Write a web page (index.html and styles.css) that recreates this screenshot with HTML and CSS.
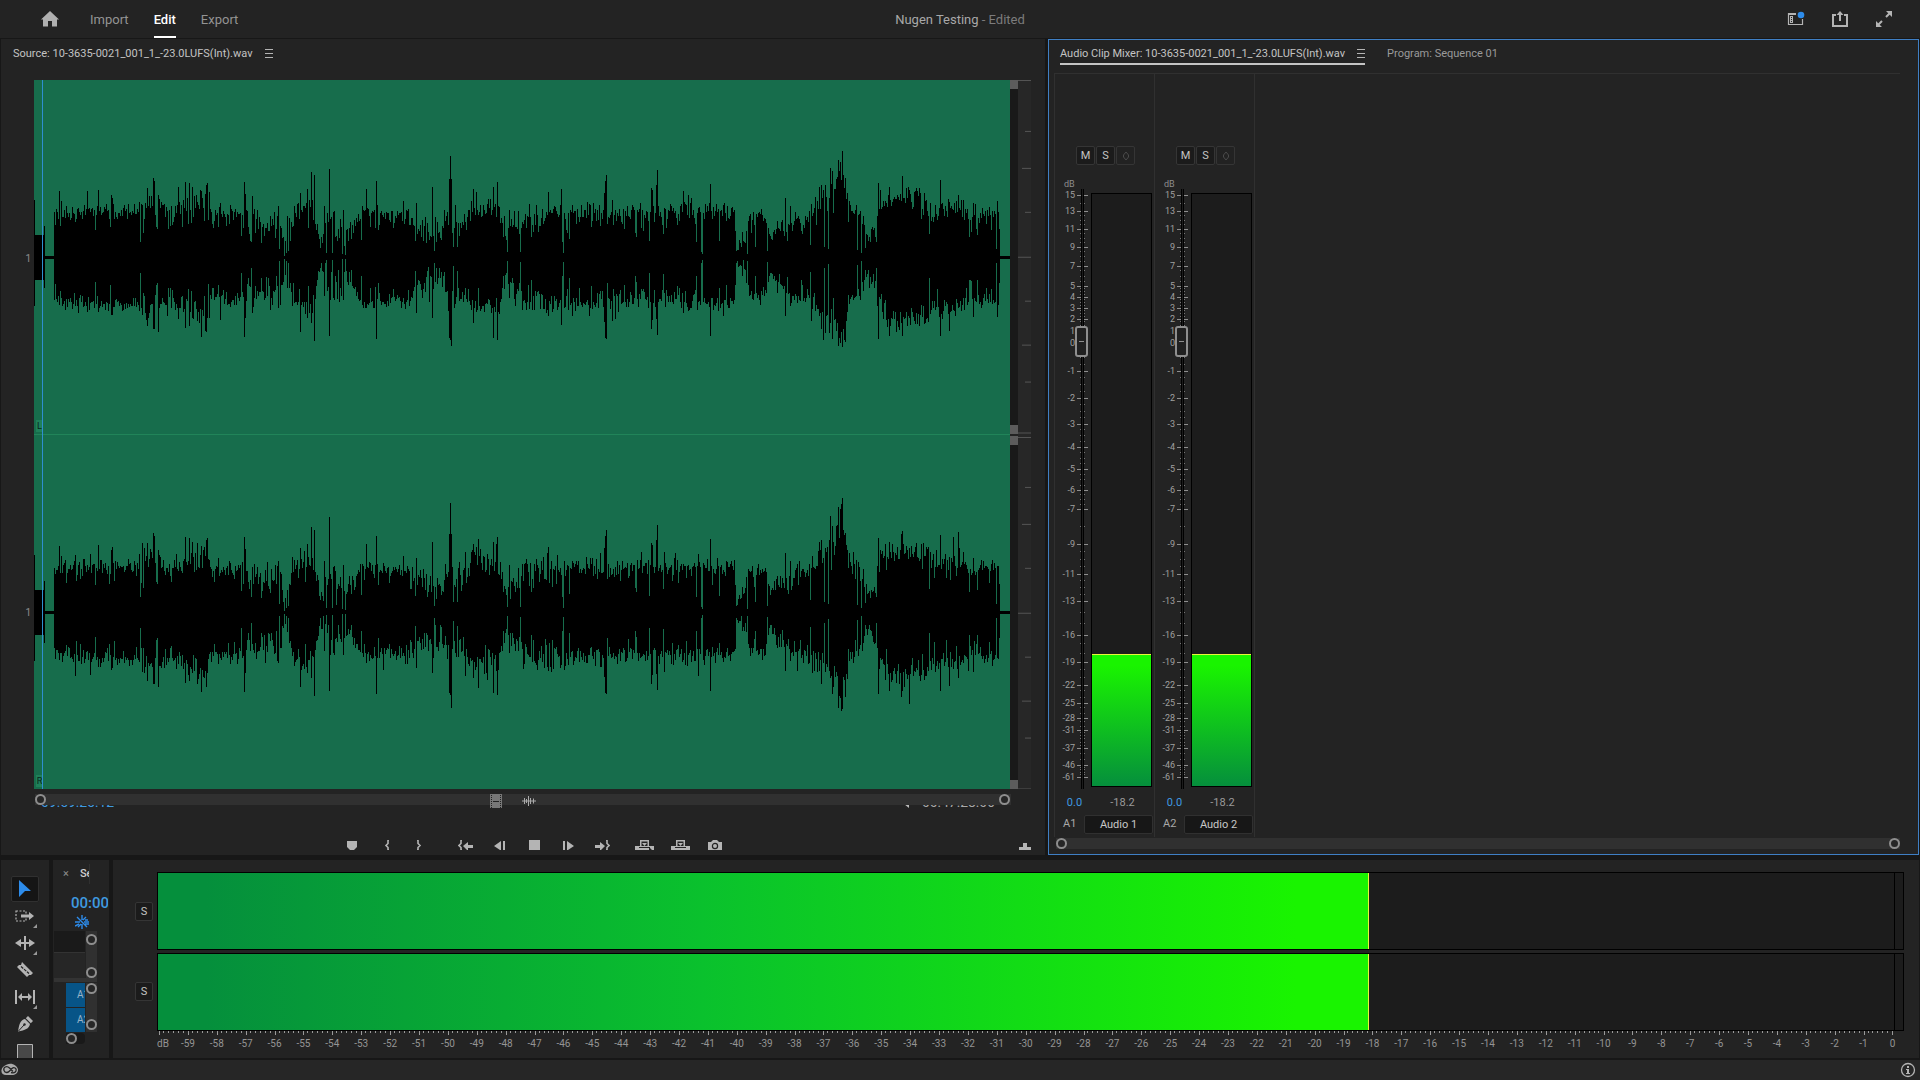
FILE: index.html
```html
<!DOCTYPE html>
<html lang="en">
<head>
<meta charset="utf-8">
<title>Nugen Testing</title>
<link rel="stylesheet" href="styles.css">
</head>
<body>
<header class="topbar">
  <nav class="topbar-nav">
    <button class="icon-btn" aria-label="Home"><svg width="18" height="16" viewBox="0 0 18 16"><path d="M9 0 0 8.500h2V15.500h5V10h4v5.500h5V8.500h2z" fill="#b0b0b0"/></svg></button>
    <a href="#import" class="mode">Import</a>
    <a href="#edit" class="mode mode-active">Edit</a>
    <a href="#export" class="mode">Export</a>
  </nav>
  <h1 class="project">Nugen Testing <span>- Edited</span></h1>
  <div class="topbar-tools">
    <button class="icon-btn" aria-label="Workspaces"><svg width="18" height="16" viewBox="0 0 18 16"><path d="M9 2.500H1.500v11h14V8M1 3.500h8" fill="none" stroke="#b4b4b4" stroke-width="1.200"/><path d="M3 5h3v7H3z" fill="#b4b4b4"/><path d="M4 6.500h1M4 8.500h1M4 10.500h1" stroke="#232323"/><circle cx="14" cy="4" r="3.300" fill="#2d8ceb"/></svg></button>
    <button class="icon-btn" aria-label="Quick export"><svg width="18" height="18" viewBox="0 0 18 18"><path d="M5 5H2v11h14V5h-3" fill="none" stroke="#b4b4b4" stroke-width="2"/><path d="M9 11V3" stroke="#b4b4b4" stroke-width="2"/><path d="M5.500 5 9 1l3.500 4z" fill="#b4b4b4"/></svg></button>
    <button class="icon-btn" aria-label="Full screen"><svg width="18" height="18" viewBox="0 0 18 18"><path d="M11 7l4-4M3 15l4-4" stroke="#b4b4b4" stroke-width="2"/><path d="M11 1h6v6zM1 11v6h6z" fill="#b4b4b4"/></svg></button>
  </div>
</header>

<main class="workspace">
  <section class="row row-upper">
    <section class="panel source">
      <div class="tabs"><h2 class="tab">Source: 10-3635-0021_001_1_-23.0LUFS(Int).wav</h2><button class="menu" aria-label="Panel menu"></button></div>
      <div class="wave-area">
        <div class="wave-labels"><span>1</span><span>1</span></div>
        <div class="wave">
          <div class="channel"><svg class="wave-svg" data-seed="7" data-boost="1" viewBox="0 0 977 354" preserveAspectRatio="none"><path/></svg><span class="channel-tag">L</span></div>
          <div class="channel"><svg class="wave-svg" data-seed="31" data-boost="1.08" viewBox="0 0 977 354" preserveAspectRatio="none"><path/></svg><span class="channel-tag">R</span></div>
          <div class="playhead"></div>
        </div>
        <div class="zoombars"><div class="zoombar"><i></i><i></i></div><div class="zoombar"><i></i><i></i></div></div>
        <div class="rulers">
          <svg viewBox="0 0 13 354" preserveAspectRatio="none"><path d="M0 .5h13M7 51.500h6M4 88.500h9M7 132.500h6M0 177.500h13M7 221.500h6M4 265.500h9M7 302.500h6M0 353.500h13"/></svg>
          <svg viewBox="0 0 13 354" preserveAspectRatio="none"><path d="M0 1.500h13M7 51.500h6M4 88.500h9M7 132.500h6M0 177.500h13M7 221.500h6M4 265.500h9M7 302.500h6M0 353.500h13"/></svg>
        </div>
      </div>
      <div class="hscroll source-scroll">
        <i class="knob"></i>
        <span class="drag-icons">
          <svg width="12" height="14" viewBox="0 0 12 14"><path d="M0 0h12v14H0z" fill="#777"/><path d="M1.500 1v13M10.500 1v13" stroke="#222" stroke-dasharray="1 1"/><path d="M3 7.500h6" stroke="#222"/></svg>
          <svg width="14" height="12" viewBox="0 0 14 12"><path d="M0 6h14M2.500 3v6M4.500 4v4M6.500 1v10M8.500 3v6M11.500 3.500v5" stroke="#aaa" fill="none"/></svg>
        </span>
        <i class="knob"></i>
      </div>
      <div class="timecodes"><span class="tc-in">09:59:25:12</span><svg width="6" height="4" viewBox="0 0 6 4"><path d="M0 0h5v4z" fill="#bbb"/></svg><span class="tc-out">00:47:28:06</span></div>
      <div class="transport">
        <div class="transport-main">
          <button class="icon-btn" aria-label="Add marker"><svg width="20" height="10"><path d="M5 1h10v6l-3 3H8L5 7z" fill="#b4b4b4"/></svg></button>
          <button class="icon-btn" aria-label="Mark in"><svg width="14" height="10"><path d="M9 0H8v3.500L6 5.500l2 2V10h1" fill="none" stroke="#b4b4b4" stroke-width="1.600"/></svg></button>
          <button class="icon-btn" aria-label="Mark out"><svg width="14" height="10"><path d="M5 0h1v3.500l2 2-2 2V10H5" fill="none" stroke="#b4b4b4" stroke-width="1.600"/></svg></button>
        </div>
        <div class="transport-main transport-play">
          <button class="icon-btn" aria-label="Go to in"><svg width="16" height="10"><path d="M4 0H3v3.500L1 5.500l2 2V10h1" fill="none" stroke="#b4b4b4" stroke-width="1.600"/><path d="M5 6l5-4v3h5v3h-5v3z" fill="#b4b4b4"/></svg></button>
          <button class="icon-btn" aria-label="Step back"><svg width="16" height="10"><path d="M9 1v9H8L2 6zM11 1h2v9h-2z" fill="#b4b4b4"/></svg></button>
          <button class="icon-btn" aria-label="Stop"><svg width="16" height="10"><path d="M3 0h11v10H3z" fill="#b4b4b4"/></svg></button>
          <button class="icon-btn" aria-label="Step forward"><svg width="16" height="10"><path d="M7 1v9h1l6-4zM3 1h2v9H3z" fill="#b4b4b4"/></svg></button>
          <button class="icon-btn" aria-label="Go to out"><svg width="16" height="10"><path d="M12 0h1v3.500l2 2-2 2V10h-1" fill="none" stroke="#b4b4b4" stroke-width="1.600"/><path d="M11 6L6 2v3H1v3h5v3z" fill="#b4b4b4"/></svg></button>
        </div>
        <div class="transport-main transport-edit">
          <button class="icon-btn" aria-label="Insert"><svg width="20" height="10"><path d="M0 6h5V0h9v6h5v4h-2L14 7v3H0z" fill="#b4b4b4"/><path d="M6.500 1.500h6V6h-6z" fill="#232323"/><path d="M7 3h5L9.500 6z" fill="#b4b4b4"/><path d="M4 7.500h11" stroke="#232323"/></svg></button>
          <button class="icon-btn" aria-label="Overwrite"><svg width="20" height="10"><path d="M0 6h5V0h9v6h5v4H0z" fill="#b4b4b4"/><path d="M6.500 1.500h6V6h-6z" fill="#232323"/><path d="M7 3h5L9.500 6z" fill="#b4b4b4"/><path d="M4 7.500h11" stroke="#232323"/></svg></button>
          <button class="icon-btn" aria-label="Export frame"><svg width="16" height="10"><path d="M1 2h3l2-2h4l2 2h3v8H1z" fill="#b4b4b4"/><circle cx="8" cy="6" r="2.600" fill="none" stroke="#232323" stroke-width="1.200"/></svg></button>
        </div>
        <button class="icon-btn add-btn" aria-label="Button editor"><svg width="12" height="7"><path d="M0 4h4V0h4v4h4v3H0z" fill="#b4b4b4"/></svg></button>
      </div>
    </section>

    <section class="panel mixer">
      <div class="tabs">
        <h2 class="tab-active"><span class="tab">Audio Clip Mixer: 10-3635-0021_001_1_-23.0LUFS(Int).wav</span><button class="menu" aria-label="Panel menu"></button></h2>
        <a class="tab tab-link" href="#program">Program: Sequence 01</a>
      </div>
      <div class="strips">
        <div class="strip">
          <div class="strip-btns"><button class="sq">M</button><button class="sq">S</button><button class="sq sq-off" aria-label="Write keyframes"><svg width="8" height="10" viewBox="0 0 8 10"><path d="M4 1l2.500 3v2L4 9 1.500 6V4z" fill="none" stroke="#4a4a4a"/></svg></button></div>
          <div class="db">dB</div>
          <div class="strip-main"><div class="scale"></div><input class="fader" type="range" min="0" max="1000" value="759" aria-label="Audio 1 volume"><div class="vmeter"><div class="vlevel"></div></div></div>
          <div class="values"><span class="vol">0.0</span><span class="peak">-18.2</span></div>
          <div class="names"><label for="track1">A1</label><input id="track1" class="track-name" value="Audio 1"></div>
        </div>
        <div class="strip">
          <div class="strip-btns"><button class="sq">M</button><button class="sq">S</button><button class="sq sq-off" aria-label="Write keyframes"><svg width="8" height="10" viewBox="0 0 8 10"><path d="M4 1l2.500 3v2L4 9 1.500 6V4z" fill="none" stroke="#4a4a4a"/></svg></button></div>
          <div class="db">dB</div>
          <div class="strip-main"><div class="scale"></div><input class="fader" type="range" min="0" max="1000" value="759" aria-label="Audio 2 volume"><div class="vmeter"><div class="vlevel"></div></div></div>
          <div class="values"><span class="vol">0.0</span><span class="peak">-18.2</span></div>
          <div class="names"><label for="track2">A2</label><input id="track2" class="track-name" value="Audio 2"></div>
        </div>
      </div>
      <div class="hscroll"><i class="knob"></i><i class="knob"></i></div>
    </section>
  </section>

  <section class="row row-lower">
    <section class="panel tools">
      <button class="tool tool-on" aria-label="Selection"><svg width="14" height="18" viewBox="0 0 14 18"><path d="M1 0l12 11H7l-6 6z" fill="#2d8ceb"/></svg></button>
      <button class="tool more" aria-label="Track select forward"><svg width="20" height="14" viewBox="0 0 20 14"><path d="M1 2h10v10H1z" fill="none" stroke="#b4b4b4" stroke-width="1.200" stroke-dasharray="2 1.500"/><path d="M6 5.500h8V3l5 4-5 4V8.500H6z" fill="#b4b4b4"/></svg></button>
      <button class="tool more" aria-label="Ripple edit"><svg width="20" height="14" viewBox="0 0 20 14"><path d="M9 0h2v14H9zM0 7l6-4v3h8V3l6 4-6 4V8H6v3z" fill="#b4b4b4"/></svg></button>
      <button class="tool" aria-label="Razor"><svg width="16" height="16" viewBox="0 0 16 16"><path d="M5 0l11 11-2 2h-2l-2 2L0 5l2-2h2z" fill="#b4b4b4"/><path d="M4 4.500l8 7" stroke="#232323" stroke-width="1.200" stroke-dasharray="3 1"/></svg></button>
      <button class="tool more" aria-label="Slip"><svg width="20" height="14" viewBox="0 0 20 14"><path d="M0 0h2v14H0zM18 0h2v14h-2zM3 7l4-4v3h6V3l4 4-4 4V8H7v3z" fill="#b4b4b4"/></svg></button>
      <button class="tool" aria-label="Pen"><svg width="16" height="16" viewBox="0 0 16 16"><path d="M11 0l5 5-2.200 2.200-5-5z" fill="#b4b4b4"/><path d="M8 3l5 5c-1 5-5 6-12 7.500C2 9 3 4 8 3z" fill="#b4b4b4"/><path d="M1.500 15l5.500-6" stroke="#232323"/><circle cx="7.500" cy="8.500" r="1.200" fill="#232323"/></svg></button>
      <button class="tool tool-cut" aria-label="Rectangle"><svg width="16" height="16" viewBox="0 0 16 16"><path d="M.5.5h15v15H.5z" fill="#484848" stroke="#b4b4b4"/></svg></button>
    </section>

    <section class="panel timeline">
      <div class="tl-tab"><button class="close" aria-label="Close">×</button><span class="tl-name">Sequence 01</span></div>
      <div class="tl-time">00:00:00:00</div>
      <svg class="tl-snap" width="14" height="14" viewBox="0 0 14 14"><path d="M0 7h5M9 7h5M0 11l4-2M7 0v5M7 9v5M2 2l10 10M11 2l-3 3M3 12l3-3M10 5h3M10 9h4" fill="none" stroke="#2d8ceb" stroke-width="1.400"/></svg>
      <div class="tl-body">
        <div class="tl-tracks"><div class="tl-dark"></div><div class="tl-empty"></div></div>
        <div class="vscroll"><i class="knob"></i><i class="knob"></i></div>
      </div>
      <div class="tl-split"></div>
      <div class="tl-body tl-audio">
        <div class="tl-tracks"><button class="patch">A1</button><button class="patch">A2</button></div>
        <div class="vscroll"><i class="knob"></i><i class="knob"></i></div>
      </div>
      <div class="tl-zoom"><i class="knob"></i></div>
    </section>

    <section class="panel meters">
      <div class="solo"><button class="sq">S</button><button class="sq">S</button></div>
      <div class="hmeters">
        <div class="hmeter"><div class="hlevel"></div></div>
        <div class="hmeter"><div class="hlevel"></div></div>
        <div class="hscale"></div>
      </div>
    </section>
  </section>
</main>

<footer class="status">
  <svg width="18" height="14" viewBox="0 0 18 14"><path d="M6 1.500c5-2 10 1 11 5 0 4-3 5.500-6 5.500H5c-3 0-5-2-4.500-5C1 4 3 3 6 1.500z" fill="#aaa"/><path d="M12 8.500L8.500 5C5.500 2 2 4.500 3 7.500s4 2 5 1l3-3c2-2 5 0 4 2.500s-3 2-5 1.500" fill="none" stroke="#262626" stroke-width="1.300"/></svg>
  <button class="icon-btn info" aria-label="Information"><svg width="16" height="16" viewBox="0 0 16 16"><circle cx="8" cy="8" r="6.500" fill="none" stroke="#b4b4b4" stroke-width="1.300"/><path d="M7 4h2v2H7zM6 7h3v4h1v1H6v-1h1V8H6z" fill="#b4b4b4"/></svg></button>
</footer>
<script src="app.js"></script>
</body>
</html>
```
FILE: styles.css
```css
* { box-sizing: border-box; }
body {
  margin: 0;
  min-height: 100vh;
  display: flex;
  flex-direction: column;
  background: #171717;
  color: #a8a8a8;
  font: 11px/16px Roboto, "Noto Sans", sans-serif;
}
h1, h2 { margin: 0; font-size: inherit; font-weight: 400; }
a { color: inherit; text-decoration: none; }
svg { display: block; }
button, input { font: inherit; color: inherit; margin: 0; padding: 0; border: 0; background: none; }
.icon-btn { display: flex; align-items: center; justify-content: center; }

/* Top bar */
.topbar {
  display: grid;
  grid-template-columns: 1fr auto 1fr;
  align-items: center;
  height: 38px;
  padding: 0 27px;
  background: #232323;
  font-size: 13px;
}
.topbar-nav { display: flex; align-items: center; gap: 25px; height: 38px; padding-left: 14px; color: #949494; }
.topbar-nav .icon-btn { margin-right: 6px; }
.mode { line-height: 38px; height: 37px; border-bottom: 2px solid transparent; }
.mode-active { color: #fff; font-weight: 500; border-color: #fff; }
.project { padding-top: 2px; color: #a8a8a8; }
.project span { color: #7c7c7c; }
.topbar-tools { display: flex; justify-content: flex-end; gap: 26px; }

/* Panels */
.workspace { flex: 1; display: flex; flex-direction: column; gap: 5px; padding: 1px 1px 2px; }
.row { display: flex; gap: 3px; min-width: 0; }
.row-upper { flex: 1; }
.row-lower { height: 198px; gap: 4px; }
.panel { background: #232323; }
.tabs { display: flex; height: 32px; padding-top: 6px; }
.tab { color: #c4c4c4; white-space: nowrap; }
.menu {
  width: 8px; height: 9px; margin: 3px 0 0 12px;
  background: repeating-linear-gradient(#b4b4b4 0 1px, transparent 1px 4px);
}
.hscroll { display: flex; justify-content: space-between; align-items: center; height: 11px; background: #303030; }
.knob { display: block; width: 11px; height: 11px; border: 2px solid #8e8e8e; border-radius: 50%; background: #262626; flex: none; }

/* Source monitor */
.source { flex: 1044 1 0; display: flex; flex-direction: column; }
.source .tabs { height: 41px; padding: 7px 0 0 12px; }
.wave-area { flex: 1; display: flex; margin-right: 14px; min-height: 400px; }
.wave-labels { width: 33px; display: flex; flex-direction: column; font-size: 10px; }
.wave-labels span { flex: 1; display: flex; align-items: center; justify-content: flex-end; padding: 3px 3px 0 0; color: #8e8e8e; }
.wave { flex: 1; position: relative; display: flex; flex-direction: column; background: #176d4c; overflow: hidden; }
.channel { flex: 1; position: relative; min-height: 0; }
.channel + .channel { border-top: 1px solid #218459; }
.wave-svg { position: absolute; inset: 0; width: 100%; height: 100%; }
.wave-svg path { fill: #000; shape-rendering: crispEdges; }
.channel-tag { position: absolute; left: 2px; bottom: 2px; width: 7px; height: 12px; background: #1f8059; color: #08261b; font-size: 9px; line-height: 13px; text-align: center; }
.playhead { position: absolute; left: 8px; top: 0; bottom: 0; width: 1px; background: #2f8fd0; }
.zoombars, .rulers { display: flex; flex-direction: column; gap: 2px; }
.zoombar { flex: 1; width: 8px; background: #191919; display: flex; flex-direction: column; justify-content: space-between; }
.zoombar i { height: 9px; background: #5c5c5c; }
.rulers { width: 13px; background: #272727; }
.rulers svg { flex: 1 1 0; width: 13px; height: 0; min-height: 0; }
.rulers path { stroke: #555; fill: none; shape-rendering: crispEdges; }
.source-scroll { margin: 5px 34px 0 34px; }
.source-scroll .knob { margin-right: 1px; }
.drag-icons { display: flex; align-items: center; gap: 20px; height: 14px; margin-top: 3px; padding-right: 20px; }
.timecodes { display: flex; align-items: flex-end; height: 3px; overflow: hidden; margin: 0 50px 0 40px; font-size: 14px; line-height: 12px; }
.tc-in { color: #3f9ae0; margin-right: auto; }
.tc-out { margin-left: 12px; }
.transport { display: grid; grid-template-columns: 1fr auto 1fr; align-items: end; height: 42px; margin: 0 14px 5px 0; padding-left: 4px; }
.transport-main { display: flex; gap: 18px; justify-content: flex-end; }
.transport-play { padding-left: 32px; }
.transport-edit { grid-column: 3; grid-row: 1; justify-content: flex-start; gap: 16px; padding-left: 25px; }
.add-btn { grid-column: 3; grid-row: 1; justify-self: end; }

/* Audio clip mixer */
.mixer { flex: 859 1 0; display: flex; flex-direction: column; border: 1px solid #3f7fc4; padding: 0 5px 5px; }
.mixer .tabs { gap: 22px; height: 33px; padding-left: 6px; }
.tab-active { display: flex; height: 19px; border-bottom: 2px solid #c4c4c4; }
.tab-link { color: #9a9a9a; }
.strips { flex: 1; display: flex; margin-right: 13px; margin-bottom: 1px; border-top: 1px solid #303030; border-left: 1px solid #303030; }
.strip { width: 100px; display: flex; flex-direction: column; padding: 72px 1px 3px 0; border-right: 1px solid #303030; }
.strip-btns { display: flex; gap: 1px; padding-left: 21px; }
.sq { width: 19px; height: 19px; border: 1px solid #353535; border-radius: 2px; background: #1b1b1b; color: #c4c4c4; display: flex; align-items: center; justify-content: center; }
.sq-off { background: #222; }
.db { margin-top: 11px; padding-left: 9px; font-size: 9px; color: #8e8e8e; }
.strip-main { flex: 1; display: grid; grid-template-columns: 33px 3px 61px; margin-top: -3px; }
.scale { grid-area: 1 / 1; display: flex; flex-direction: column; padding-top: 6px; font-size: 9px; background: linear-gradient(90deg, transparent 26px, #000 26px 27px, #1c1c1c 27px 28px, #000 28px 29px, transparent 29px); }
.seg { display: grid; grid-template-columns: 20px 11px; gap: 2px; min-height: 0; flex-basis: 0; }
.seg-label { height: 0; line-height: 0; text-align: right; color: #a0a0a0; }
.seg-ticks { display: flex; flex-direction: column; justify-content: space-evenly; align-items: center; min-height: 0; background: linear-gradient(90deg, #8e8e8e 4px, transparent 4px 7px, #8e8e8e 7px) top / 100% 1px no-repeat; }
.seg-ticks i { width: 5px; height: 1px; border: solid #777; border-width: 0 1px; }
.fader {
  grid-area: 1 / 1;
  justify-self: end;
  width: 13px; height: 100%;
  writing-mode: vertical-lr; direction: rtl;
  appearance: none; -webkit-appearance: none;
}
.fader::-webkit-slider-thumb {
  -webkit-appearance: none;
  width: 13px; height: 31px;
  border: 2px solid #8e8e8e; border-radius: 3px;
  background: linear-gradient(#8e8e8e, #8e8e8e) center / 5px 1px no-repeat #202020;
}
.vmeter { grid-column: 3; margin: 4px 0 2px; padding: 0 1px 1px; outline: 1px solid #000; outline-offset: -1px; background: #1c1c1c; display: flex; flex-direction: column; justify-content: flex-end; }
.vlevel { height: 22.300%; border-top: 1px solid #e9f53a; background: linear-gradient(#19f400 8%, #058f3c); }
.values { display: flex; align-items: center; height: 25px; padding-top: 3px; }
.values span { text-align: center; }
.vol { width: 39px; color: #3f9ae0; }
.peak { width: 57px; color: #9a9a9a; }
.names { display: flex; align-items: center; justify-content: space-between; height: 20px; padding-left: 8px; }
.track-name { width: 69px; height: 19px; border: 1px solid #303030; border-radius: 2px; background: #171717; color: #c8c8c8; text-align: center; }
.mixer .hscroll { margin: 0 13px 0 2px; }

/* Tools */
.tools { width: 48px; display: flex; flex-direction: column; align-items: center; padding-top: 16px; overflow: hidden; }
.tool { flex: none; width: 28px; height: 27px; position: relative; display: flex; align-items: center; justify-content: center; }
.tool-on { height: 26px; border: 1px solid #303030; border-radius: 2px; background: #151515; }
.more::after { content: ""; position: absolute; right: 2px; bottom: 1px; border: 2px solid transparent; border-right-color: #999; border-bottom-color: #999; }
.tool-cut { height: 30px; }

/* Timeline */
.timeline { width: 56px; display: flex; flex-direction: column; padding: 4px 0 0 1px; overflow: hidden; }
.tl-tab { display: flex; align-items: center; height: 20px; width: 36px; padding-left: 9px; gap: 11px; border-right: 1px solid #303030; overflow: hidden; }
.close { color: #8e8e8e; }
.tl-name { color: #d0d0d0; font-weight: 500; white-space: nowrap; }
.tl-time { margin: 9px 0 0 17px; width: 37px; overflow: hidden; font-size: 15px; line-height: 20px; font-weight: 500; color: #3f9ae0; }
.tl-snap { margin: 2px 0 2px 21px; }
.tl-body { display: flex; gap: 1px; height: 47px; width: 43px; }
.tl-tracks { flex: 1; min-width: 0; display: flex; flex-direction: column; }
.tl-dark { height: 22px; background: #1a1a1a; border-bottom: 1px solid #333; }
.tl-empty { flex: 1; background: #262626; }
.vscroll { width: 11px; display: flex; flex-direction: column; justify-content: space-between; padding: 3px 0 0; background: #303030; }
.tl-split { width: 43px; height: 4px; background: #333; }
.tl-audio { height: 49px; margin-top: 1px; }
.tl-audio .tl-tracks { gap: 1px; }
.tl-audio .vscroll { padding: 0 0 2px; }
.patch { flex: 1; margin-left: 12px; padding-left: 11px; overflow: hidden; background: #075487; color: #9ab4c8; font-size: 10px; text-align: left; }
.tl-zoom { width: 19px; margin: 1px 0 0 12px; background: #191919; border-radius: 0 4px 4px 0; }

/* Audio meters */
.meters { flex: 1; display: flex; gap: 4px; padding: 12px 15px 0 22px; }
.solo { display: flex; flex-direction: column; gap: 61px; padding-top: 30px; }
.solo .sq { width: 18px; }
.hmeters { flex: 1; display: flex; flex-direction: column; gap: 3px; }
.hmeter { height: 78px; display: flex; border: 1px solid #000; background: linear-gradient(#000, #000) right 8px top / 1px 100% no-repeat #1c1c1c; }
.hlevel { width: 69.400%; border-right: 1px solid #e9f53a; background: linear-gradient(90deg, #058f3c, #058f3c 4%, #0ac12d 45%, #19f400 94%); }
.hscale { display: flex; margin: -3px 12px 0 2px; font-size: 10px; }
.hseg { flex: 1 1 0; min-width: 0; }
.hseg:last-child { flex: 0 0 0; }
.hseg-ticks { display: flex; justify-content: space-evenly; height: 4px; background: linear-gradient(#999, #999) left / 1px 100% no-repeat; width: 100%; }
.hseg:last-child .hseg-ticks { width: 1px; }
.hseg-ticks i { width: 1px; height: 2px; background: #999; }
.hseg-label { display: flex; justify-content: center; width: 0; white-space: nowrap; line-height: 18px; color: #949494; }
.hseg:first-child .hseg-label { width: 8px; }

/* Status bar */
.status { display: flex; justify-content: space-between; align-items: center; height: 20px; padding: 0 4px 0 1px; background: #262626; }
```
FILE: app.js
```js
// Fader scale: label, offset of its tick in the scale, minor ticks below it.
const marks = [
  ["15", 0, 1], ["13", 16, 3], ["11", 34, 3], ["9", 52, 3], ["7", 71, 3], ["5", 91, 3], ["4", 102, 3], ["3", 113, 3],
  ["2", 124, 3], ["1", 136, 1], ["0", 148, 3], ["-1", 176, 3], ["-2", 203, 3], ["-3", 229, 3], ["-4", 252, 3],
  ["-5", 274, 3], ["-6", 295, 3], ["-7", 314, 1], ["-9", 349, 3], ["-11", 379, 3], ["-13", 406, 2], ["-16", 440, 2],
  ["-19", 467, 2], ["-22", 490, 2], ["-25", 508, 2], ["-28", 523, 2], ["-31", 535, 5], ["-37", 553, 2], ["-46", 570, 4], ["-61", 582, 0]
];
document.querySelectorAll(".scale").forEach(scale => {
  scale.innerHTML = marks.map(([label, at, minor], i) => {
    const end = i + 1 < marks.length ? marks[i + 1][1] : 594;
    return `<div class="seg" style="flex-grow:${end - at}"><span class="seg-label">${label}</span><span class="seg-ticks">${"<i></i>".repeat(minor)}</span></div>`;
  }).join("");
});

// Output meter scale, -60 dB to 0 dB.
document.querySelector(".hscale").innerHTML = Array.from({ length: 61 }, (_, i) => {
  const label = i === 0 ? "dB" : i - 60;
  return `<div class="hseg"><div class="hseg-ticks">${i < 60 ? "<i></i>".repeat(5) : ""}</div><div class="hseg-label">${label}</div></div>`;
}).join("");

// Envelope knots: column, level above the centre line, level below, spread.
const env = [
  [20, 43, 41, 6], [60, 45, 45, 6], [96, 46, 46, 6], [118, 54, 54, 8], [135, 43, 43, 7], [152, 50, 50, 9], [172, 58, 62, 11],
  [175, 45, 40, 7], [205, 42, 42, 8], [212, 34, 34, 13], [246, 32, 34, 14], [250, 12, 12, 5], [256, 35, 35, 8], [264, 50, 50, 6], [280, 46, 44, 8],
  [286, 14, 8, 4], [292, 26, 22, 12], [305, 24, 26, 14], [316, 24, 20, 8], [328, 46, 44, 5], [345, 44, 43, 6], [368, 40, 42, 6],
  [378, 40, 40, 9], [384, 28, 28, 12], [404, 26, 26, 12], [416, 36, 36, 12], [427, 34, 38, 12], [438, 46, 44, 10], [445, 50, 50, 9], [464, 46, 48, 9], [472, 20, 16, 5],
  [480, 30, 32, 12], [492, 40, 44, 12], [530, 45, 47, 8], [590, 42, 42, 8], [600, 45, 42, 7], [660, 46, 44, 7], [701, 44, 44, 7],
  [704, 12, 7, 4], [712, 16, 10, 6], [716, 40, 38, 7], [733, 40, 36, 7], [737, 20, 14, 3], [744, 26, 24, 8], [757, 32, 34, 8],
  [770, 40, 40, 9], [788, 48, 50, 10], [798, 62, 62, 16], [808, 82, 78, 10], [812, 72, 72, 10], [818, 48, 40, 6], [829, 40, 38, 7], [832, 16, 14, 8],
  [841, 24, 28, 8], [847, 52, 48, 10], [860, 60, 60, 9], [875, 60, 62, 10], [893, 56, 58, 10], [899, 48, 46, 9], [929, 52, 50, 8], [937, 34, 32, 10], [947, 44, 42, 8], [966, 45, 45, 2]
];
// Single columns that stand out: transients and near-silent gaps.
const cols = {
  25: [66, 47], 27: [56, 40], 61: [27, 24], 64: [67, 54], 77: [62, 57], 106: [15, 15], 109: [24, 35], 113: [69, 68], 119: [79, 71], 120: [76, 71],
  122: [30, 27], 123: [28, 25], 124: [62, 74], 151: [75, 70], 155: [74, 68], 158: [70, 60], 167: [66, 79], 172: [72, 74], 173: [74, 60],
  207: [21, 15], 210: [75, 79], 211: [63, 60], 214: [30, 20], 217: [15, 10], 220: [48, 40], 224: [28, 38], 227: [14, 20], 234: [26, 20],
  242: [28, 18], 244: [51, 50], 245: [8, 3], 250: [1, 1], 252: [4, 3], 254: [6, 5], 266: [64, 74], 273: [68, 60], 277: [85, 65], 280: [82, 83], 290: [51, 38], 292: [4, 2],
  295: [88, 78], 296: [38, 42], 298: [4, 2], 299: [45, 40], 300: [46, 42], 304: [28, 12], 308: [3, 1], 309: [47, 42], 311: [2, 1], 317: [18, 12], 327: [17, 18],
  332: [68, 50], 342: [76, 81], 344: [27, 25], 369: [56, 40], 381: [16, 13], 382: [54, 55], 398: [70, 60], 400: [6, 5], 407: [17, 14], 415: [78, 80], 416: [101, 82],
  417: [78, 88], 419: [10, 8], 423: [10, 13], 439: [68, 65], 442: [65, 54], 459: [70, 80], 463: [75, 82], 469: [20, 18], 473: [5, 3], 475: [47, 40], 478: [30, 20],
  486: [5, 4], 498: [20, 22], 515: [65, 58], 529: [15, 18], 530: [4, 4], 536: [18, 20], 571: [64, 64], 572: [76, 80], 573: [82, 81], 574: [33, 25],
  602: [24, 18], 603: [20, 24], 616: [16, 15], 618: [69, 71], 619: [67, 62], 623: [72, 61], 624: [87, 77], 630: [23, 16], 663: [15, 18], 668: [5, 5], 669: [3, 2],
  677: [73, 78], 686: [16, 30], 703: [6, 5], 709: [25, 18], 714: [3, 3], 722: [10, 18], 734: [6, 4], 744: [36, 35], 752: [59, 58], 757: [51, 48], 777: [12, 14],
  786: [70, 58], 788: [72, 71], 791: [10, 10], 795: [8, 6], 797: [89, 65], 799: [86, 81], 805: [97, 88], 807: [95, 85], 809: [106, 89], 812: [79, 84],
  823: [52, 38], 824: [7, 7], 828: [4, 3], 832: [9, 12], 843: [15, 10], 845: [74, 81], 856: [70, 78], 869: [81, 78], 883: [69, 55], 896: [23, 20], 907: [77, 78], 916: [55, 73],
  936: [20, 22], 940: [54, 59], 944: [22, 22], 963: [8, 5], 966: [28, 25]
};
function columns(seed, boost) {
  let state = seed;
  const rand = () => (state = (state * 16807) % 2147483647) / 2147483647;
  for (let i = 0; i < 9; i++) rand();
  const out = [];
  let k = 0;
  for (let x = 0; x < 977; x++) {
    const r1 = rand() + rand() - 1, r2 = rand() + rand() - 1, r3 = rand();
    if (x === 0) { out.push([57, 48]); continue; }
    if (x < 10) { out.push([22, 22]); continue; }
    if (x === 10) { out.push([31, 30]); continue; }
    if (x < 20 || x > 966) { out.push([1, 1]); continue; }
    if (cols[x]) { out.push(cols[x].map(v => v > 87 ? Math.round(v * boost) : v)); continue; }
    while (k < env.length - 2 && env[k + 1][0] <= x) k++;
    const a = env[k], b = env[k + 1];
    const t = Math.min(1, (x - a[0]) / (b[0] - a[0]));
    const mix = j => a[j] + (b[j] - a[j]) * t;
    const spread = mix(3) * 1.6;
    const swing = r3 < 0.06 ? 0.7 : r3 > 0.94 ? 1.25 : 1;
    out.push([Math.max(2, Math.round((mix(1) + r1 * spread) * swing)), Math.max(2, Math.round((mix(2) + r2 * spread) * swing))]);
  }
  return out;
}
document.querySelectorAll(".wave-svg").forEach(svg => {
  const d = columns(+svg.dataset.seed, +svg.dataset.boost).map(([up, down], x) => `M${x} ${177 - up}h1v${up + down + 1}h-1z`).join("");
  svg.querySelector("path").setAttribute("d", d);
});
```
